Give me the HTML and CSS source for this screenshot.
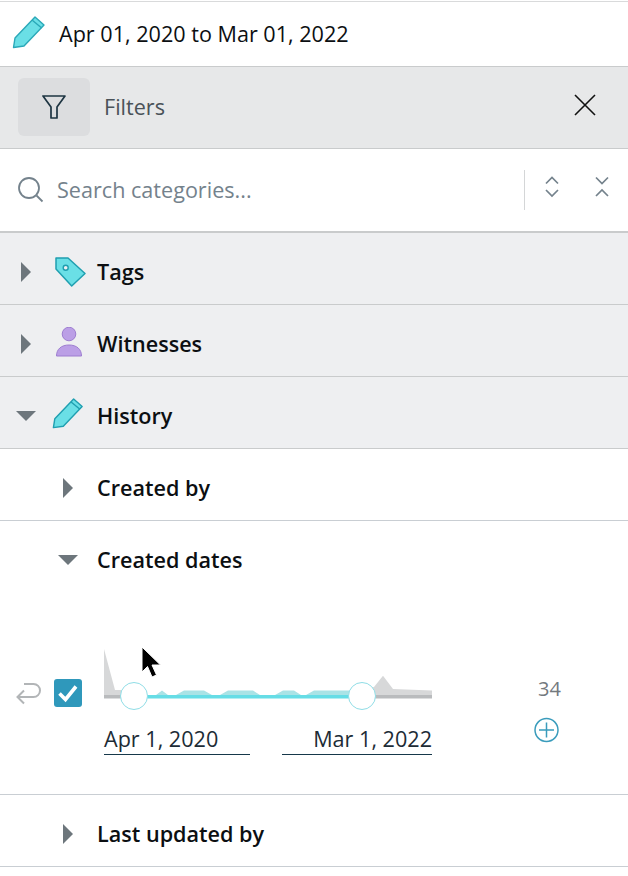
FILE: index.html
```html
<!DOCTYPE html>
<html lang="en">
<head>
<meta charset="utf-8">
<title>Filters</title>
<link rel="stylesheet" href="styles.css">
</head>
<body>
<div class="panel">
  <div class="date-row">
    <svg class="pencil-top" width="34" height="34" viewBox="0 0 34 34"><path d="M1.500 31.500 3 22 23 1l9 8-20 21z" fill="#6adfe6" stroke="#2aa8b8" stroke-width="1.400" stroke-linejoin="round"/><path d="M20.300 4.300l9.400 7.700" stroke="#2aa8b8" stroke-width="1.400"/></svg>
    <span class="date-text">Apr 01, 2020 to Mar 01, 2022</span>
  </div>
  <div class="filter-bar">
    <div class="filter-btn">
      <svg width="24" height="24" viewBox="0 0 24 24"><path d="M1 1h22L15 12v11H9V12z" fill="none" stroke="#1d3442" stroke-width="1.700" stroke-linejoin="round"/></svg>
    </div>
    <span class="filter-label">Filters</span>
    <svg class="close" width="22" height="22" viewBox="0 0 22 22"><path d="M1 1l20 20M21 1 1 21" stroke="#111" stroke-width="1.600"/></svg>
  </div>
  <div class="search-row">
    <svg width="28" height="28" viewBox="0 0 28 28"><circle cx="12" cy="12" r="10" fill="none" stroke="#74828c" stroke-width="1.800"/><path d="M19.500 19.500l6 6" stroke="#74828c" stroke-width="1.800"/></svg>
    <span class="search-text">Search categories...</span>
    <div class="search-tools">
      <svg width="14" height="24" viewBox="0 0 14 24"><path d="M1 7.500l6-6 6 6M1 14l6 6 6-6" fill="none" stroke="#74828c" stroke-width="1.700"/></svg>
      <svg width="14" height="24" viewBox="0 0 14 24"><path d="M1 1.500l6 6 6-6M1 20l6-6 6 6" fill="none" stroke="#74828c" stroke-width="1.700"/></svg>
    </div>
  </div>

  <div class="row row-grey row-first">
    <span class="arrow-right"></span>
    <svg class="row-icon" width="32" height="32" viewBox="0 0 32 32"><path d="M2 2h12l17 15.500L17.700 30 2 13z" fill="#6adfe6" stroke="#1f9fb0" stroke-width="1.500" stroke-linejoin="round"/><circle cx="11.700" cy="11.700" r="2.500" fill="#eef0f2" stroke="#1f9fb0" stroke-width="1.400"/></svg>
    <span class="row-label">Tags</span>
  </div>
  <div class="row row-grey">
    <span class="arrow-right"></span>
    <svg class="row-icon" width="32" height="34" viewBox="0 0 32 34"><circle cx="15" cy="7" r="6.800" fill="#bb9fe6" stroke="#9d7dd0" stroke-width="1"/><path d="M2.500 29c0-7 5-11 12.500-11s12.500 4 12.500 11z" fill="#bb9fe6" stroke="#9d7dd0" stroke-width="1"/></svg>
    <span class="row-label">Witnesses</span>
  </div>
  <div class="row row-grey">
    <span class="arrow-down"></span>
    <svg class="row-icon row-icon-pencil" width="32" height="32" viewBox="0 0 34 34"><path d="M1.500 31.500 3 22 23 1l9 8-20 21z" fill="#6adfe6" stroke="#1f9fb0" stroke-width="1.500" stroke-linejoin="round"/><path d="M20.300 4.300l9.400 7.700" stroke="#1f9fb0" stroke-width="1.500"/></svg>
    <span class="row-label">History</span>
  </div>
  <div class="row row-sub">
    <span class="arrow-right"></span>
    <span class="row-label">Created by</span>
  </div>
  <div class="dates-block">
    <div class="row row-sub row-plain">
      <span class="arrow-down"></span>
      <span class="row-label">Created dates</span>
    </div>
    <div class="range-row">
      <svg class="undo" width="26" height="24" viewBox="0 0 26 24"><path d="M9 2h9.500a6.500 6.500 0 0 1 0 13h-16M9 8.500 2.500 15 9 21.500" fill="none" stroke="#b2b5b7" stroke-width="2"/></svg>
      <div class="check">
        <svg width="28" height="28" viewBox="0 0 28 28"><path d="M5.500 14.500l6 6L22 7.500" fill="none" stroke="#fff" stroke-width="3.600"/></svg>
      </div>
      <div class="range">
        <div class="chart">
          <svg width="328" height="50" viewBox="0 0 328 50">
            <path d="M0 0 11 41H30V46H0z" fill="#d7d8d9"/>
            <path d="M44 46H52L58 41.500 64 46H72L80 41.500H100L108 46H116L124 41.500H149L156 46H171L179 41.500H190L197 46H202L210 41.500H258V46z" fill="#a9e3e6"/>
            <path d="M258 46V41L270 38 279 26.700 289 40 328 41.500V46z" fill="#d7d8d9"/>
            <rect y="46" width="30" height="3.500" fill="#b9bbbd"/>
            <rect x="30" y="46" width="228" height="3.500" fill="#66dde6"/>
            <rect x="258" y="46" width="70" height="3.500" fill="#b9bbbd"/>
          </svg>
          <span class="thumb thumb-a"></span>
          <span class="thumb thumb-b"></span>
        </div>
        <div class="range-inputs">
          <span class="range-input">Apr 1, 2020</span>
          <span class="range-input range-end">Mar 1, 2022</span>
        </div>
      </div>
      <div class="count-col">
        <span class="count">34</span>
        <svg width="26" height="26" viewBox="0 0 26 26"><circle cx="12.500" cy="13" r="11.500" fill="none" stroke="#3a9cbc" stroke-width="1.500"/><path d="M12.500 5.500v15M5 13h15" stroke="#3a9cbc" stroke-width="1.500"/></svg>
      </div>
    </div>
  </div>
  <div class="row row-sub">
    <span class="arrow-right"></span>
    <span class="row-label">Last updated by</span>
  </div>

  <svg class="cursor" width="26" height="38" viewBox="0 0 26 38"><path d="M2 1v25l5.500-5.500 4.500 10.500 4.500-2-4.500-10h8.500z" fill="#000" stroke="#fff" stroke-width="1"/></svg>
</div>
</body>
</html>
```

FILE: styles.css
```css
* { box-sizing: border-box; }
html, body { margin: 0; padding: 0; background: #fff; }
body { font-family: "Open Sans", sans-serif; color: #0c0f12; padding-top: 1px; }
.panel { position: relative; width: 628px; height: 875px; overflow: hidden; border-top: 1px solid #d9dadb; }
.date-row { height: 64px; display: flex; align-items: center; padding-left: 12px; padding-bottom: 2px; }
.pencil-top { margin-right: 13px; flex: none; }
.date-text { font-size: 21.600px; }
.filter-bar { height: 83px; background: #e7e8e9; border-top: 1px solid #c9cbcc; border-bottom: 1px solid #c9cbcc; display: flex; align-items: center; padding: 0 32px 2px 18px; }
.filter-btn { width: 72px; height: 58px; background: #dcdddf; border-radius: 6px; display: flex; align-items: center; justify-content: center; flex: none; }
.filter-label { font-size: 21.600px; color: #4a5258; margin-left: 14px; flex: 1; margin-bottom: 1px; }
.close { margin-bottom: 3px; }
.search-row { height: 82px; display: flex; align-items: center; padding-left: 17px; }
.search-text { font-size: 21.600px; color: #74828c; margin-left: 12px; flex: 1; margin-bottom: 2px; }
.search-tools { height: 40px; border-left: 1px solid #d4d6d7; display: flex; align-items: center; gap: 36px; padding-left: 20px; padding-right: 19px; }
.search-tools svg { margin-bottom: 4px; }
.row { height: 72px; display: flex; align-items: center; border-bottom: 1px solid #c9cbcc; padding-top: 6px; }
.row-grey { background: #eeeff1; padding-left: 16px; }
.row-first { border-top: 2px solid #c9cbcc; height: 74px; }
.row-sub { padding-left: 58px; border-bottom-color: #c9ced3; }
.row-plain { border-bottom: 0; height: 71px; }
.arrow-right { width: 20px; display: flex; justify-content: center; flex: none; }
.arrow-right::before { content: ""; border-left: 10px solid #6d767c; border-top: 10px solid transparent; border-bottom: 10px solid transparent; }
.arrow-down { width: 20px; display: flex; justify-content: center; flex: none; }
.arrow-down::before { content: ""; border-top: 10px solid #6d767c; border-left: 10px solid transparent; border-right: 10px solid transparent; }
.row-icon { margin-left: 18px; margin-right: 11px; flex: none; }
.row-icon-pencil { margin: -3px 13px 0 16px; }
.row-sub .row-label { margin-left: 19px; }
.row-label { font-size: 21.600px; font-weight: 600; color: #0c0f12; }
.dates-block { height: 274px; border-bottom: 1px solid #c9ced3; }
.range-row { display: flex; align-items: flex-start; padding-top: 57px; padding-left: 15px; }
.undo { margin-top: 33px; flex: none; }
.check { width: 28px; height: 28px; margin-left: 13px; margin-top: 30px; background: #2f98bb; border-radius: 3px; flex: none; }
.check svg { display: block; }
.range { width: 328px; margin-left: 22px; flex: none; }
.chart { position: relative; height: 50px; }
.chart svg { display: block; }
.thumb { position: absolute; top: 33px; width: 28px; height: 28px; border-radius: 50%; background: #fff; border: 1px solid #8fdde6; }
.thumb-a { left: 16px; }
.thumb-b { left: 244px; }
.range-inputs { display: flex; justify-content: space-between; margin-top: 25px; }
.range-input { width: 146px; font-size: 21.600px; line-height: 30px; height: 31px; border-bottom: 1px solid #16384a; color: #1d2c36; white-space: nowrap; }
.range-end { width: 150px; text-align: right; }
.count-col { margin-left: 102px; margin-top: 27px; display: flex; flex-direction: column; align-items: flex-start; gap: 15px; width: 26px; }
.count { font-size: 20px; line-height: 26px; color: #73797e; margin-left: 4px; }
.count-col svg { display: block; }
.cursor { position: absolute; left: 140px; top: 644px; }
```
